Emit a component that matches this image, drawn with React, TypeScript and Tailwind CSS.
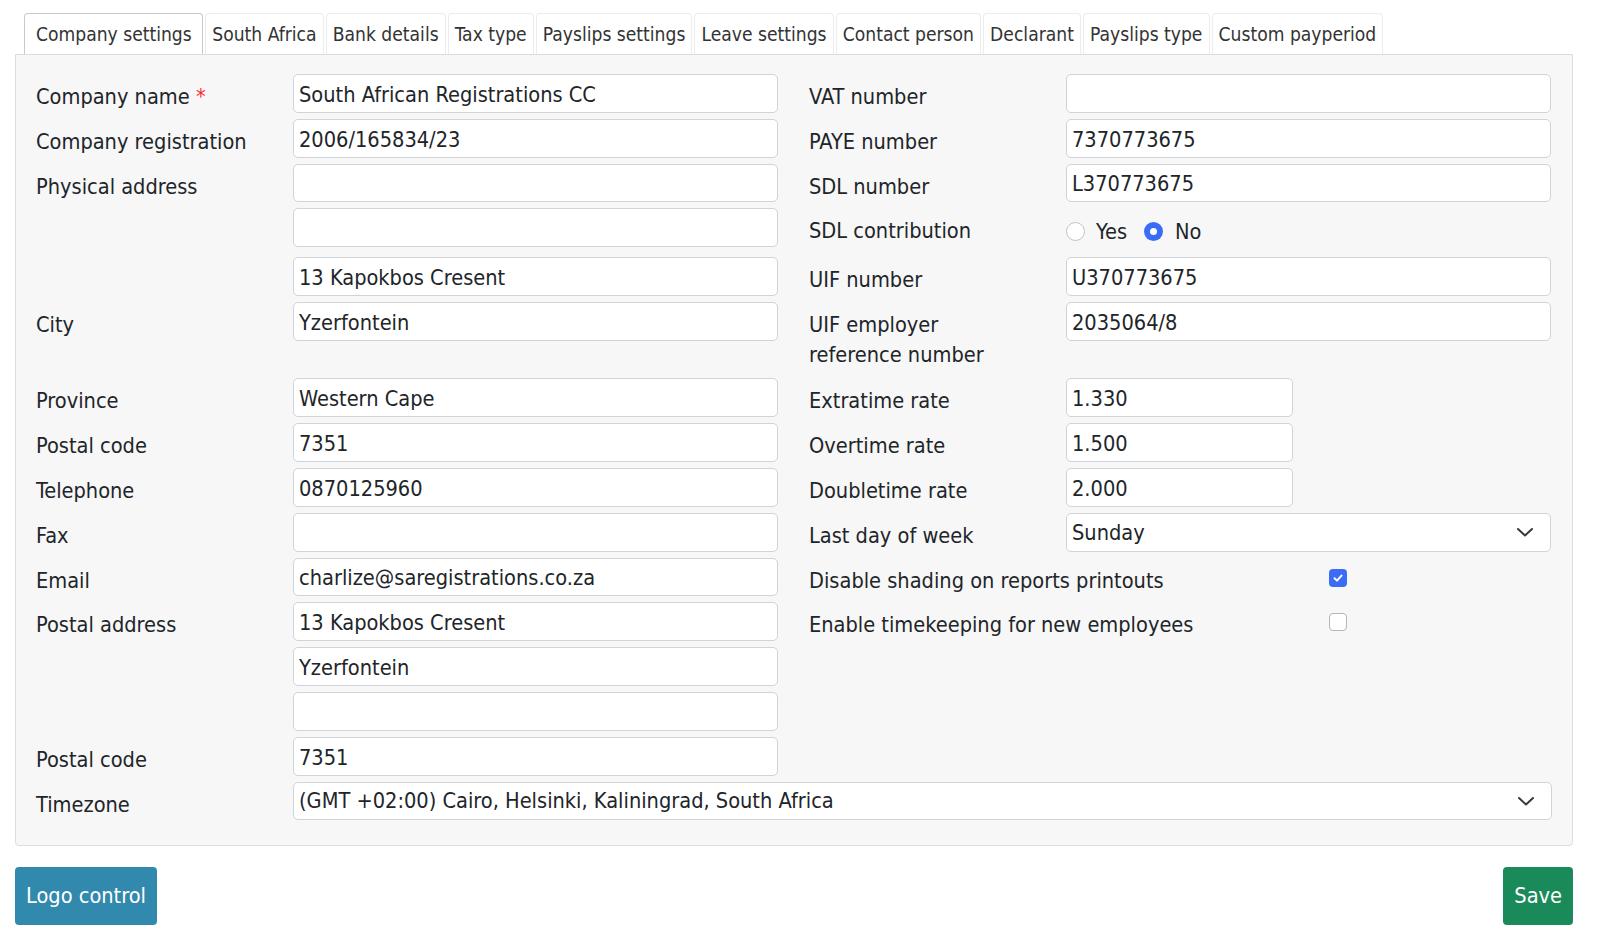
import React from "react";

const inputCls =
  "h-[38.8px] w-full border border-[#ced4da] rounded-[5px] bg-white px-[5px] pt-[2px] text-[21.6px] leading-[30px] text-[#212529] outline-none";

function Field({ value = "", short = false }: { value?: string; short?: boolean }) {
  return (
    <input
      readOnly
      defaultValue={value}
      className={inputCls + (short ? " !w-[227px]" : "")}
    />
  );
}

function Chevron() {
  return (
    <svg width="18" height="12" viewBox="0 0 18 12" fill="none">
      <path d="M2 3 L9 9.5 L16 3" stroke="#343a40" strokeWidth="2" strokeLinecap="round" strokeLinejoin="round" />
    </svg>
  );
}

function Select({ value }: { value: string }) {
  return (
    <div className="h-[38.8px] w-full border border-[#ced4da] rounded-[5px] bg-white pl-[5px] pr-[16px] text-[21.6px] leading-[30px] text-[#212529] flex items-center justify-between">
      <span className="pt-[1px]">{value}</span>
      <Chevron />
    </div>
  );
}

function Label({ children, extra = "" }: { children?: React.ReactNode; extra?: string }) {
  return (
    <div className={"w-[257px] shrink-0 pt-[8px] text-[21.6px] leading-[29.6px] text-[#212529] " + extra}>
      {children}
    </div>
  );
}

function Half({ children }: { children?: React.ReactNode }) {
  return <div className="w-[742px] flex items-start">{children}</div>;
}

function Row({ children, h = "" }: { children?: React.ReactNode; h?: string }) {
  return <div className={"flex gap-[31px] mb-[6px] " + h}>{children}</div>;
}

function Radio({ checked }: { checked: boolean }) {
  return checked ? (
    <span className="block w-[19px] h-[19px] rounded-full bg-[#3b6cf6] flex items-center justify-center">
      <span className="block w-[7px] h-[7px] rounded-full bg-white" />
    </span>
  ) : (
    <span className="block w-[19px] h-[19px] rounded-full border border-[#c4c4c4] bg-white" />
  );
}

function Checkbox({ checked }: { checked: boolean }) {
  return checked ? (
    <span className="w-[18px] h-[18px] rounded-[4px] bg-[#3b6cf6] flex items-center justify-center">
      <svg width="12" height="12" viewBox="0 0 12 12" fill="none">
        <path d="M2.5 6.2 L5 8.6 L9.5 3.6" stroke="white" strokeWidth="2" strokeLinecap="round" strokeLinejoin="round" />
      </svg>
    </span>
  ) : (
    <span className="block w-[18px] h-[18px] rounded-[4px] border border-[#b5b5b5] bg-white" />
  );
}

const tabs = [
  "Company settings",
  "South Africa",
  "Bank details",
  "Tax type",
  "Payslips settings",
  "Leave settings",
  "Contact person",
  "Declarant",
  "Payslips type",
  "Custom payperiod",
];

export default function App() {
  return (
    <div className="min-h-[949px] bg-white font-['DejaVu_Sans_Condensed','DejaVu_Sans',sans-serif] text-[#212529]">
      <div className="w-[1558px] ml-[15px] pt-[13px]">
        <div className="flex gap-[2px] pl-[9px]">
          {tabs.map((t, i) =>
            i === 0 ? (
              <div
                key={t}
                className="h-[41px] pl-[11px] pr-[10.5px] pt-[2px] flex items-center bg-white border border-[#c9c9c9] border-b-0 rounded-t-[4px] text-[19.1px] text-[#333]"
              >
                {t}
              </div>
            ) : (
              <div
                key={t}
                className="h-[41px] px-[6.1px] pt-[2px] flex items-center bg-white border border-[#ececec] border-b-0 rounded-t-[4px] text-[19.1px] text-[#333]"
              >
                {t}
              </div>
            )
          )}
        </div>
        <div className="bg-[#f7f7f7] border border-[#dcdcdc] rounded-b-[4px] px-[20px] pt-[19px] pb-[25px]">
          <Row>
            <Half>
              <Label>
                Company name <span className="text-[#ff2a2a]">*</span>
              </Label>
              <Field value="South African Registrations CC" />
            </Half>
            <Half>
              <Label>VAT number</Label>
              <Field />
            </Half>
          </Row>
          <Row>
            <Half>
              <Label>Company registration</Label>
              <Field value="2006/165834/23" />
            </Half>
            <Half>
              <Label>PAYE number</Label>
              <Field value="7370773675" />
            </Half>
          </Row>
          <Row>
            <Half>
              <Label>Physical address</Label>
              <Field />
            </Half>
            <Half>
              <Label>SDL number</Label>
              <Field value="L370773675" />
            </Half>
          </Row>
          <Row h="h-[43px]">
            <Half>
              <Label />
              <Field />
            </Half>
            <Half>
              <Label>SDL contribution</Label>
              <div className="flex items-center h-[46px] pt-[1px] text-[21.6px]">
                <Radio checked={false} />
                <span className="ml-[11px]">Yes</span>
                <span className="ml-[17px]" />
                <Radio checked={true} />
                <span className="ml-[12px]">No</span>
              </div>
            </Half>
          </Row>
          <Row>
            <Half>
              <Label />
              <Field value="13 Kapokbos Cresent" />
            </Half>
            <Half>
              <Label>UIF number</Label>
              <Field value="U370773675" />
            </Half>
          </Row>
          <Row>
            <Half>
              <Label>City</Label>
              <Field value="Yzerfontein" />
            </Half>
            <Half>
              <Label extra="pb-[3px]">
                UIF employer
                <br />
                reference number
              </Label>
              <Field value="2035064/8" />
            </Half>
          </Row>
          <Row>
            <Half>
              <Label>Province</Label>
              <Field value="Western Cape" />
            </Half>
            <Half>
              <Label>Extratime rate</Label>
              <Field value="1.330" short />
            </Half>
          </Row>
          <Row>
            <Half>
              <Label>Postal code</Label>
              <Field value="7351" />
            </Half>
            <Half>
              <Label>Overtime rate</Label>
              <Field value="1.500" short />
            </Half>
          </Row>
          <Row>
            <Half>
              <Label>Telephone</Label>
              <Field value="0870125960" />
            </Half>
            <Half>
              <Label>Doubletime rate</Label>
              <Field value="2.000" short />
            </Half>
          </Row>
          <Row>
            <Half>
              <Label>Fax</Label>
              <Field />
            </Half>
            <Half>
              <Label>Last day of week</Label>
              <Select value="Sunday" />
            </Half>
          </Row>
          <Row>
            <Half>
              <Label>Email</Label>
              <Field value="charlize@saregistrations.co.za" />
            </Half>
            <Half>
              <div className="w-[520px] shrink-0 pt-[8px] text-[21.6px] leading-[29.6px]">
                Disable shading on reports printouts
              </div>
              <div className="pt-[11px]">
                <Checkbox checked={true} />
              </div>
            </Half>
          </Row>
          <Row>
            <Half>
              <Label>Postal address</Label>
              <Field value="13 Kapokbos Cresent" />
            </Half>
            <Half>
              <div className="w-[520px] shrink-0 pt-[8px] text-[21.6px] leading-[29.6px]">
                Enable timekeeping for new employees
              </div>
              <div className="pt-[11px]">
                <Checkbox checked={false} />
              </div>
            </Half>
          </Row>
          <Row>
            <Half>
              <Label />
              <Field value="Yzerfontein" />
            </Half>
            <Half />
          </Row>
          <Row>
            <Half>
              <Label />
              <Field />
            </Half>
            <Half />
          </Row>
          <Row>
            <Half>
              <Label>Postal code</Label>
              <Field value="7351" />
            </Half>
            <Half />
          </Row>
          <div className="flex items-start">
            <Label>Timezone</Label>
            <Select value="(GMT +02:00) Cairo, Helsinki, Kaliningrad, South Africa" />
          </div>
        </div>
        <div className="flex justify-between mt-[21px]">
          <button className="h-[58px] px-[11px] rounded-[4px] bg-[#3189ad] text-white text-[21.6px]">
            Logo control
          </button>
          <button className="h-[58px] px-[11px] rounded-[4px] bg-[#1b8a5a] text-white text-[21.6px]">
            Save
          </button>
        </div>
      </div>
    </div>
  );
}
